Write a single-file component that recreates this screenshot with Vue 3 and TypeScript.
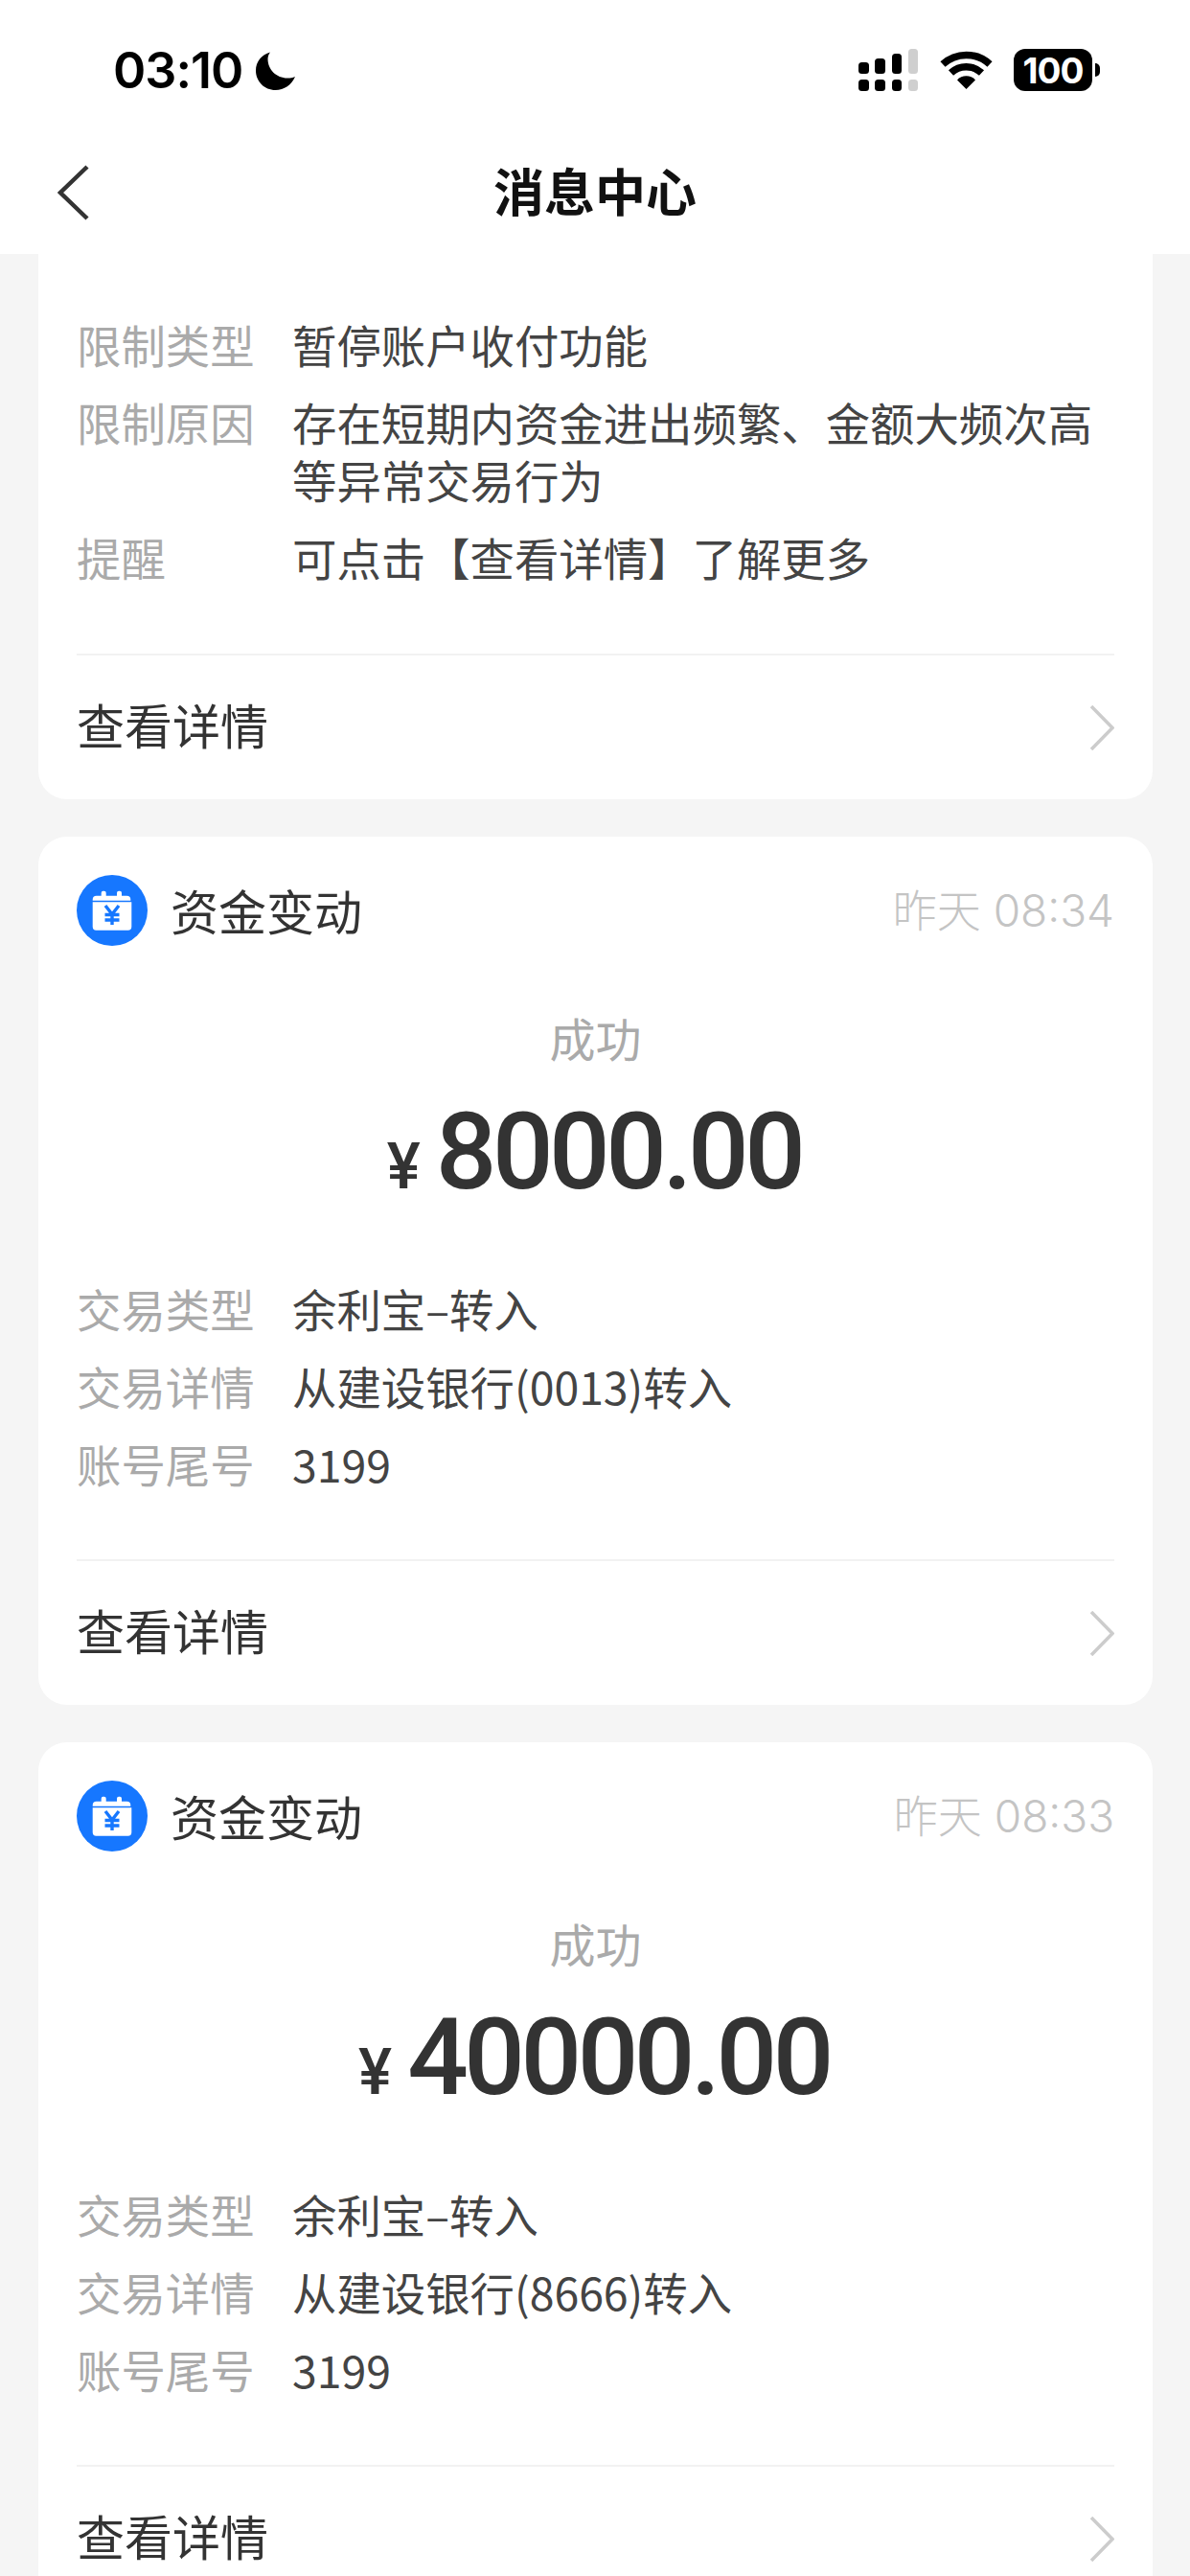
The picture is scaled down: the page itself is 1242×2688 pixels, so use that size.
<script setup lang="ts">
interface Row {
  label: string
  value: string
}

interface Card {
  time: string
  amount: string
  rows: Row[]
}

const noticeRows: Row[] = [
  { label: '限制类型', value: '暂停账户收付功能' },
  { label: '限制原因', value: '存在短期内资金进出频繁、金额大频次高等异常交易行为' },
  { label: '提醒', value: '可点击【查看详情】了解更多' }
]

const cards: Card[] = [
  {
    time: '昨天 08:34',
    amount: '8000.00',
    rows: [
      { label: '交易类型', value: '余利宝–转入' },
      { label: '交易详情', value: '从建设银行(0013)转入' },
      { label: '账号尾号', value: '3199' }
    ]
  },
  {
    time: '昨天 08:33',
    amount: '40000.00',
    rows: [
      { label: '交易类型', value: '余利宝–转入' },
      { label: '交易详情', value: '从建设银行(8666)转入' },
      { label: '账号尾号', value: '3199' }
    ]
  }
]
</script>

<template>
  <div class="page">
    <header class="top">
      <div class="status">
        <div class="clock">
          <span>03:10</span>
          <svg class="moon" width="41" height="40" viewBox="0 0 41 40">
            <path d="M15 0.5C6 3 0 10.5 0 19.5C0 31 9 40 20.5 40C29.5 40 37.5 34.5 41 26C38.5 27 36 27.5 33 27.5C21.5 27.5 12.5 18.5 12.5 7.5C12.5 5 13.5 2.500 15 0.5Z" fill="#000" />
          </svg>
        </div>
        <div class="indicators">
          <svg width="62" height="44" viewBox="0 0 62 44">
            <rect x="0" y="14" width="11" height="12" rx="3.5" />
            <rect x="17" y="10" width="11" height="16" rx="3.5" />
            <rect x="35" y="5" width="10" height="21" rx="3.5" />
            <rect x="52" y="0" width="10" height="26" rx="3.5" fill="#cfcfcf" />
            <rect x="0" y="32" width="11" height="12" rx="3.5" />
            <rect x="17" y="32" width="11" height="12" rx="3.5" />
            <rect x="35" y="32" width="10" height="12" rx="3.5" />
            <rect x="52" y="32" width="10" height="12" rx="3.5" fill="#cfcfcf" />
          </svg>
          <svg class="wifi" width="55" height="41" viewBox="0 0 55 41">
            <path d="M3 15A36 36 0 0 1 52 15" fill="none" stroke="#000" stroke-width="7.5" />
            <path d="M11.5 24A23.5 23.5 0 0 1 43.5 24" fill="none" stroke="#000" stroke-width="7.5" />
            <path d="M27.5 41L18 31.5A13 13 0 0 1 37 31.5Z" fill="#000" />
          </svg>
          <div class="battery">
            <span class="battery-level">100</span>
            <i class="battery-nub"></i>
          </div>
        </div>
      </div>
      <nav class="nav">
        <svg class="back" width="34" height="58" viewBox="0 0 34 58">
          <path d="M31 2L3 29L31 56" fill="none" stroke="#333" stroke-width="4.5" />
        </svg>
        <h1>消息中心</h1>
      </nav>
    </header>

    <main class="list">
      <section class="card card-cut">
        <div class="rows">
          <div v-for="row in noticeRows" :key="row.label" class="row">
            <span class="row-label">{{ row.label }}</span>
            <span class="row-value">{{ row.value }}</span>
          </div>
        </div>
        <div class="more">
          <span>查看详情</span>
          <svg width="26" height="47" viewBox="0 0 26 47">
            <path d="M2 1L24 23.5L2 46" fill="none" stroke="#ccc" stroke-width="3.5" />
          </svg>
        </div>
      </section>

      <section v-for="card in cards" :key="card.time" class="card">
        <div class="card-head">
          <svg width="74" height="74" viewBox="0 0 74 74">
            <circle cx="37" cy="37" r="37" fill="#1677ff" />
            <path d="M25.7 21.7V18.7a2 2 0 0 1 2-2h1a2 2 0 0 1 2 2v3h11.3v-3a2 2 0 0 1 2-2h1a2 2 0 0 1 2 2v3h5.300a4 4 0 0 1 4 4v1H16.700v-1a4 4 0 0 1 4-4Z" fill="#fff" />
            <path d="M16.700 28.200H57.300V54a3.700 3.700 0 0 1-3.700 3.700H20.400a3.700 3.700 0 0 1-3.700-3.700Z" fill="#fff" />
            <path d="M30 32L37 41L44 32M37 41V52M29.500 41.500H44.500M29.500 47H44.500" fill="none" stroke="#1677ff" stroke-width="3.400" />
          </svg>
          <span class="card-title">资金变动</span>
          <span class="card-time">{{ card.time }}</span>
        </div>
        <div class="status-text">成功</div>
        <div class="amount">
          <span class="currency">¥</span>
          <span class="figure">{{ card.amount }}</span>
        </div>
        <div class="rows">
          <div v-for="row in card.rows" :key="row.label" class="row">
            <span class="row-label">{{ row.label }}</span>
            <span class="row-value">{{ row.value }}</span>
          </div>
        </div>
        <div class="more">
          <span>查看详情</span>
          <svg width="26" height="47" viewBox="0 0 26 47">
            <path d="M2 1L24 23.5L2 46" fill="none" stroke="#ccc" stroke-width="3.5" />
          </svg>
        </div>
      </section>
    </main>
  </div>
</template>

<style scoped>
.page {
  width: 1242px;
  height: 2688px;
  overflow: hidden;
  background: #f5f5f5;
  font-family: "Noto Sans CJK SC", "Noto Sans", sans-serif;
  color: #333;
}

.top {
  height: 265px;
  background: #fff;
}

.status {
  height: 146px;
  padding: 51px 102px 0 118px;
  box-sizing: border-box;
  display: flex;
  justify-content: space-between;
  align-items: flex-start;
}

.clock {
  display: flex;
  align-items: center;
  gap: 14px;
  height: 44px;
  font-family: Inter, sans-serif;
  font-size: 52px;
  font-weight: 600;
  color: #000;
  letter-spacing: -1px;
}

.moon {
  margin-top: 2px;
}

.indicators {
  display: flex;
  align-items: flex-start;
  gap: 23px;
}

.wifi {
  margin-top: 1px;
}

.battery {
  position: relative;
  width: 82px;
  height: 44px;
  margin-left: -1px;
  border-radius: 12px;
  background: #000;
  display: flex;
  align-items: center;
  justify-content: center;
}

.battery-level {
  font-family: Inter, sans-serif;
  font-size: 37px;
  font-weight: 700;
  color: #fff;
  letter-spacing: -1px;
}

.battery-nub {
  position: absolute;
  right: -8px;
  top: 15px;
  width: 5px;
  height: 14px;
  border-radius: 0 7px 7px 0;
  background: #000;
}

.nav {
  height: 119px;
  padding-bottom: 16px;
  box-sizing: border-box;
  position: relative;
  display: flex;
  align-items: center;
  justify-content: center;
}

.nav h1 {
  margin: 0;
  font-size: 53px;
  font-weight: 700;
  line-height: 80px;
  color: #111;
}

.back {
  position: absolute;
  left: 60px;
  top: 26px;
}

.list {
  padding: 0 39px 0 40px;
  display: flex;
  flex-direction: column;
  gap: 39px;
}

.card {
  flex: none;
  background: #fff;
  border-radius: 30px;
  padding: 0 40px;
}

.card-cut {
  border-radius: 0 0 30px 30px;
  padding-top: 64px;
}

.card-cut .rows {
  padding-bottom: 71px;
}

.card-head {
  display: flex;
  align-items: center;
  height: 74px;
  padding-top: 40px;
}

.card-title {
  margin-left: 24px;
  padding-bottom: 3px;
  font-size: 50px;
  color: #333;
}

.card-time {
  margin-left: auto;
  padding-bottom: 6px;
  font-family: Inter, "Noto Sans CJK SC", sans-serif;
  font-size: 46px;
  font-weight: 300;
  color: #c4c4c4;
}

.status-text {
  margin-top: 62px;
  text-align: center;
  font-size: 48px;
  line-height: 66px;
  color: #aaa;
}

.amount {
  margin-top: 22px;
  margin-right: 3px;
  height: 130px;
  display: flex;
  justify-content: center;
  align-items: baseline;
  gap: 16px;
  font-family: Roboto, sans-serif;
  color: #333;
}

.currency {
  font-size: 66px;
  font-weight: 500;
}

.figure {
  font-size: 112px;
  font-weight: 500;
  line-height: 130px;
  letter-spacing: -4.5px;
}

.card .amount + .rows {
  margin-top: 68px;
}

.rows {
  display: flex;
  flex-direction: column;
  gap: 21px;
  padding-bottom: 70px;
}

.row {
  display: flex;
  font-size: 46.4px;
  line-height: 60px;
}

.row-label {
  flex: none;
  width: 225px;
  color: #aaa;
}

.row-value {
  width: 858px;
  color: #444;
}

.more {
  height: 152px;
  padding-bottom: 8px;
  box-sizing: border-box;
  border-top: 2px solid #f2f2f2;
  display: flex;
  align-items: center;
  justify-content: space-between;
  font-size: 50px;
  color: #333;
}

.more svg {
  margin-top: 8px;
}
</style>

<style>
html,
body {
  margin: 0;
  background: #f5f5f5;
}
</style>
